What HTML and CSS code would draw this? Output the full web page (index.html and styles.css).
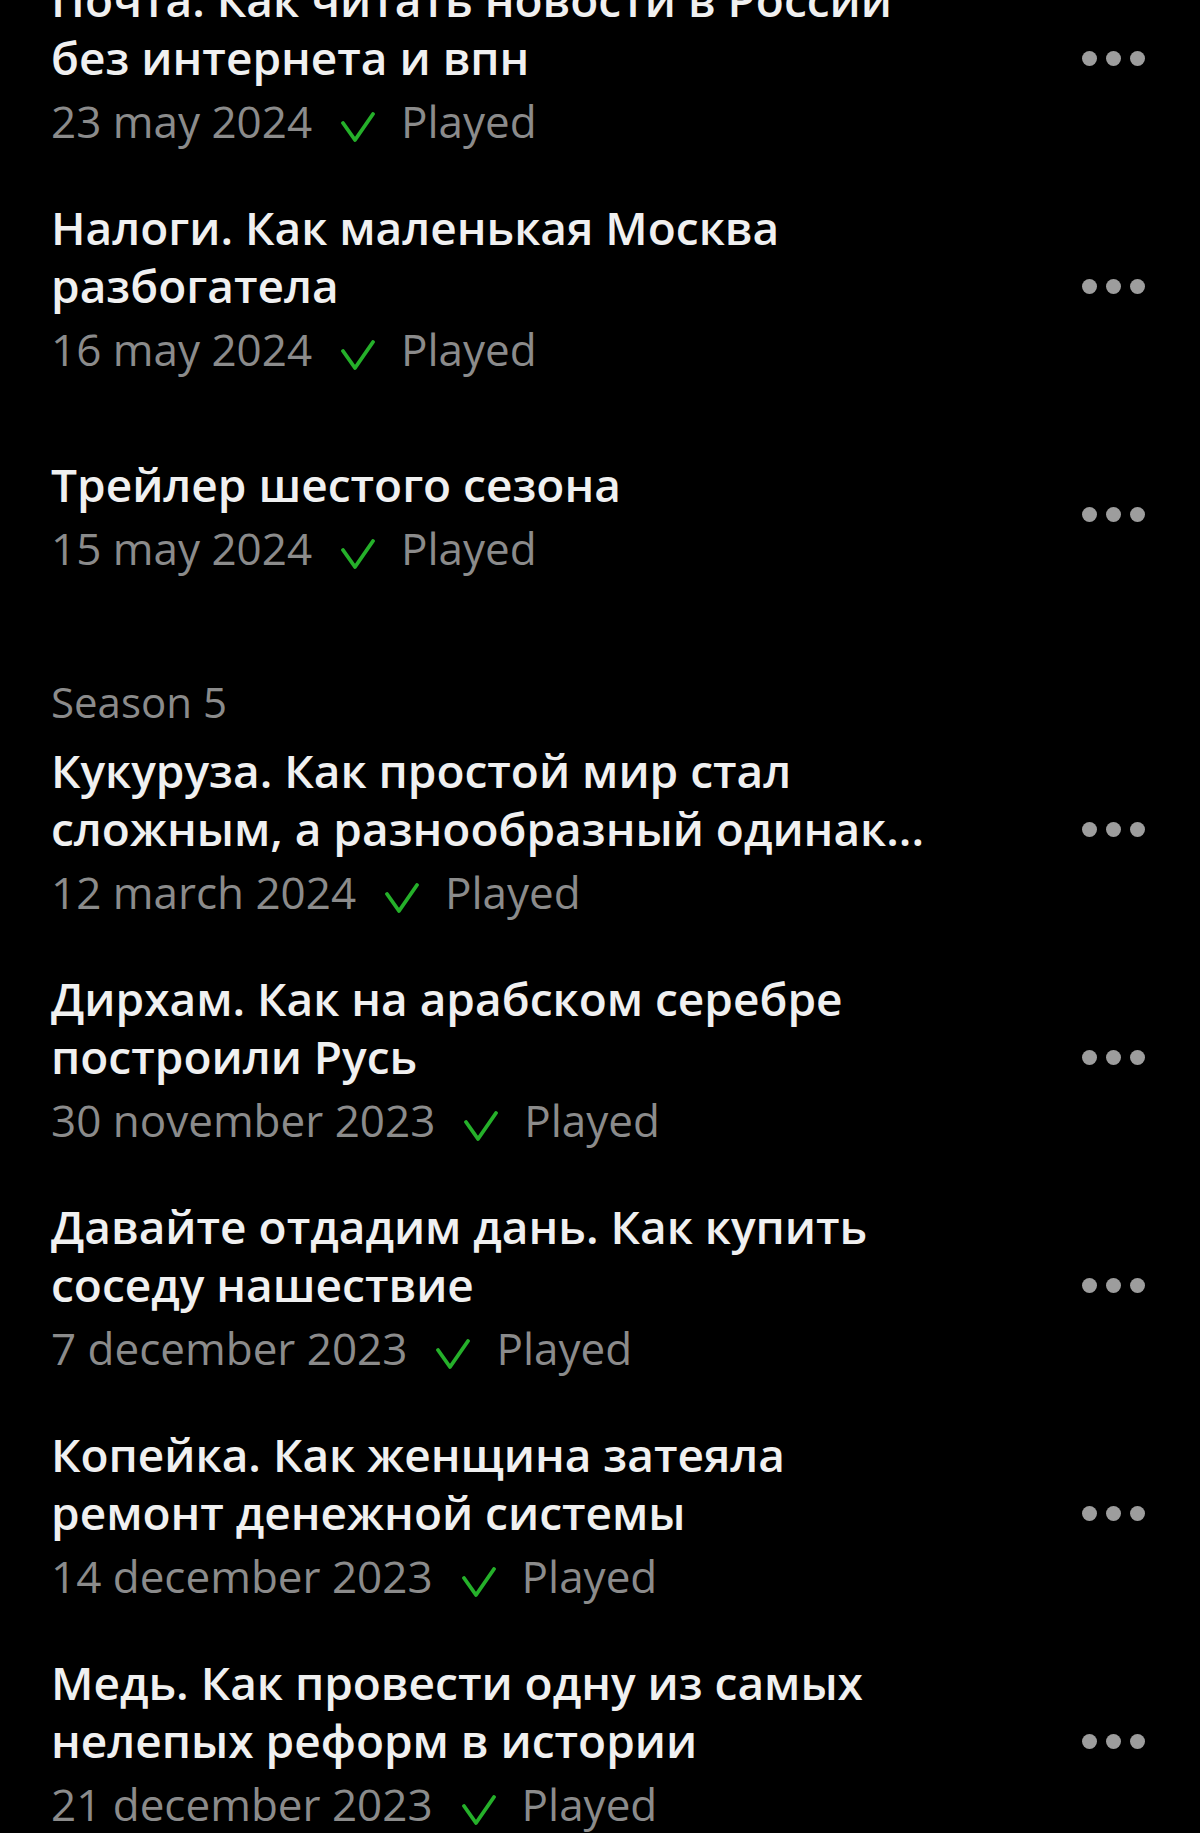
FILE: index.html
```html
<!DOCTYPE html>
<html lang="ru">
<head>
<meta charset="utf-8">
<title>Episodes</title>
<link rel="stylesheet" href="styles.css">
</head>
<body>
<main class="episodes">
  <ul class="list">
    <li class="ep">
      <div class="ep-body">
        <p class="ep-title">Почта. Как читать новости в России без интернета и впн</p>
        <p class="ep-meta"><span class="date">23 may 2024</span><svg class="check" viewBox="0 0 34 30"><polyline points="2,11 14,28 32,2"/></svg><span class="played">Played</span></p>
      </div>
      <button class="more" type="button"><i></i><i></i><i></i></button>
    </li>
    <li class="ep">
      <div class="ep-body">
        <p class="ep-title">Налоги. Как маленькая Москва разбогатела</p>
        <p class="ep-meta"><span class="date">16 may 2024</span><svg class="check" viewBox="0 0 34 30"><polyline points="2,11 14,28 32,2"/></svg><span class="played">Played</span></p>
      </div>
      <button class="more" type="button"><i></i><i></i><i></i></button>
    </li>
    <li class="ep">
      <div class="ep-body">
        <p class="ep-title">Трейлер шестого сезона</p>
        <p class="ep-meta"><span class="date">15 may 2024</span><svg class="check" viewBox="0 0 34 30"><polyline points="2,11 14,28 32,2"/></svg><span class="played">Played</span></p>
      </div>
      <button class="more" type="button"><i></i><i></i><i></i></button>
    </li>
    <li class="season">Season 5</li>
    <li class="ep">
      <div class="ep-body">
        <p class="ep-title">Кукуруза. Как простой мир стал сложным, а разнообразный одинак...</p>
        <p class="ep-meta"><span class="date">12 march 2024</span><svg class="check" viewBox="0 0 34 30"><polyline points="2,11 14,28 32,2"/></svg><span class="played">Played</span></p>
      </div>
      <button class="more" type="button"><i></i><i></i><i></i></button>
    </li>
    <li class="ep">
      <div class="ep-body">
        <p class="ep-title">Дирхам. Как на арабском серебре построили Русь</p>
        <p class="ep-meta"><span class="date">30 november 2023</span><svg class="check" viewBox="0 0 34 30"><polyline points="2,11 14,28 32,2"/></svg><span class="played">Played</span></p>
      </div>
      <button class="more" type="button"><i></i><i></i><i></i></button>
    </li>
    <li class="ep">
      <div class="ep-body">
        <p class="ep-title">Давайте отдадим дань. Как купить соседу нашествие</p>
        <p class="ep-meta"><span class="date">7 december 2023</span><svg class="check" viewBox="0 0 34 30"><polyline points="2,11 14,28 32,2"/></svg><span class="played">Played</span></p>
      </div>
      <button class="more" type="button"><i></i><i></i><i></i></button>
    </li>
    <li class="ep">
      <div class="ep-body">
        <p class="ep-title">Копейка. Как женщина затеяла ремонт денежной системы</p>
        <p class="ep-meta"><span class="date">14 december 2023</span><svg class="check" viewBox="0 0 34 30"><polyline points="2,11 14,28 32,2"/></svg><span class="played">Played</span></p>
      </div>
      <button class="more" type="button"><i></i><i></i><i></i></button>
    </li>
    <li class="ep">
      <div class="ep-body">
        <p class="ep-title">Медь. Как провести одну из самых нелепых реформ в истории</p>
        <p class="ep-meta"><span class="date">21 december 2023</span><svg class="check" viewBox="0 0 34 30"><polyline points="2,11 14,28 32,2"/></svg><span class="played">Played</span></p>
      </div>
      <button class="more" type="button"><i></i><i></i><i></i></button>
    </li>
  </ul>
</main>
</body>
</html>
```
FILE: styles.css
```css
* { box-sizing: border-box; }

html, body {
  margin: 0;
  padding: 0;
  background: #000;
}

body {
  font-family: "Open Sans", "Noto Sans", sans-serif;
  color: #f1f1f1;
  overflow: hidden;
  height: 1833px;
}

/* list is scrolled: the first row starts above the viewport */
.list {
  list-style: none;
  margin: -56px 0 0;
  padding: 0;
}

.ep {
  display: flex;
  align-items: center;
  min-height: 228px;
  padding: 0 55px 0 51px;
}

.ep-body {
  flex: 1;
  min-width: 0;
  margin-top: 5px;
}

.ep-title {
  margin: 0;
  max-width: 880px;
  font-size: 46px;
  font-weight: 600;
  line-height: 58px;
  color: #f0f0f0;
}

.ep-meta {
  margin: 5px 0 0;
  display: flex;
  align-items: center;
  font-size: 44px;
  line-height: 60px;
  color: #8b8b8b;
}

.check {
  flex: none;
  width: 34px;
  height: 30px;
  margin: 11px 26px 0 29px;
  fill: none;
  stroke: #25b02a;
  stroke-width: 3.8;
  stroke-linecap: round;
  stroke-linejoin: round;
}

.more {
  flex: none;
  display: flex;
  gap: 9px;
  padding: 0;
  margin: 0;
  border: 0;
  background: none;
}

.more i {
  display: block;
  width: 15px;
  height: 15px;
  border-radius: 50%;
  background: #9d9d9d;
}

.season {
  padding: 44px 0 0 51px;
  margin-bottom: -17px;
  font-size: 42px;
  line-height: 60px;
  color: #8b8b8b;
}
```
